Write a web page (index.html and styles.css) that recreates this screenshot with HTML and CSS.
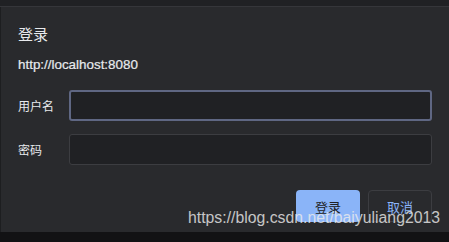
FILE: index.html
```html
<!DOCTYPE html>
<html lang="zh">
<head>
<meta charset="utf-8">
<title>登录</title>
<link rel="stylesheet" href="styles.css">
</head>
<body>
<div class="frame">
  <div class="topbar"></div>
  <div class="dialog">
    <div class="title">登录</div>
    <div class="origin">http://localhost:8080</div>
    <div class="form">
      <label class="label" for="u">用户名</label>
      <div class="input focused" id="u"></div>
      <label class="label" for="p">密码</label>
      <div class="input" id="p"></div>
    </div>
    <div class="actions">
      <div class="btn primary">登录</div>
      <div class="btn secondary">取消</div>
    </div>
  </div>
  <div class="bottombar"></div>
  <div class="watermark">https://blog.csdn.net/baiyuliang2013</div>
</div>
</body>
</html>
```
FILE: styles.css
```css
html, body {
  margin: 0;
  padding: 0;
  background: #292a2d;
}
.frame {
  position: relative;
  width: 449px;
  height: 242px;
  overflow: hidden;
  background: #292a2d;
  font-family: "Liberation Sans", "Noto Sans CJK SC", sans-serif;
  color: #e8eaed;
}
.topbar {
  height: 6px;
  background: #202124;
  border-bottom: 1px solid #35363a;
}
.dialog {
  display: flex;
  flex-direction: column;
  padding: 0 17px 0 17px;
  border-left: 1px solid #1d1e20;
  height: 225px;
  box-sizing: border-box;
}
.title {
  margin-top: 19px;
  font-size: 15px;
  line-height: 18px;
  color: #e8eaed;
}
.origin {
  margin-top: 13px;
  font-size: 13.4px;
  line-height: 16px;
  color: #e8eaed;
  -webkit-text-stroke: 0.2px #e8eaed;
}
.form {
  margin-top: 17px;
  display: grid;
  grid-template-columns: 51px 1fr;
  grid-auto-rows: 31px;
  row-gap: 13px;
  align-items: center;
}
.label {
  font-size: 12px;
  color: #e8eaed;
}
.input {
  height: 31px;
  box-sizing: border-box;
  background: #202124;
  border: 1px solid #3c3d41;
  border-radius: 3px;
}
.input.focused {
  border: 2px solid #5f6783;
}
.actions {
  margin-top: 25px;
  display: flex;
  justify-content: flex-end;
  gap: 8px;
}
.btn {
  width: 64px;
  height: 32px;
  box-sizing: border-box;
  border-radius: 4px;
  display: flex;
  align-items: center;
  justify-content: center;
  font-size: 13px;
}
.btn.primary {
  background: #8ab4f8;
  color: #202124;
}
.btn.secondary {
  border: 1px solid #3c3d41;
  color: #8ab4f8;
}
.bottombar {
  height: 10px;
  background: #121214;
}
.watermark {
  position: absolute;
  left: 188px;
  top: 209px;
  font-family: "Liberation Sans", sans-serif;
  font-size: 15.8px;
  line-height: 18px;
  color: rgba(235, 235, 235, 0.82);
  white-space: nowrap;
}
```
